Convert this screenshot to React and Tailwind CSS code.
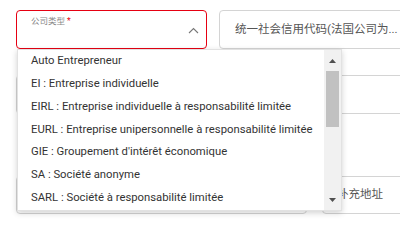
import React from "react";

const items = [
  "Auto Entrepreneur",
  "EI : Entreprise individuelle",
  "EIRL : Entreprise individuelle à responsabilité limitée",
  "EURL : Entreprise unipersonnelle à responsabilité limitée",
  "GIE : Groupement d'intérêt économique",
  "SA : Société anonyme",
  "SARL : Société à responsabilité limitée",
];

export default function App() {
  return (
    <div
      className="relative w-[400px] h-[226px] overflow-hidden bg-white"
      style={{ fontFamily: 'Roboto, "Noto Sans CJK SC", sans-serif' }}
    >
      <div className="flex flex-col pt-[10px] pl-[16px]">
        {/* row 1 */}
        <div className="flex gap-[12px] h-[39px]">
          <div className="relative w-[191px] shrink-0 rounded-[4px] border border-[#e60012] bg-white">
            <div className="absolute left-[14px] top-[6px] text-[8.5px] text-[#888] leading-none">
              公司类型<span className="text-[#e60012] ml-[2px]">*</span>
            </div>
            <svg className="absolute left-[171px] top-[16px]" width="11" height="7" viewBox="0 0 11 7">
              <path d="M1 6 L5.5 1.5 L10 6" fill="none" stroke="#777" strokeWidth="1.1" />
            </svg>
          </div>
          <div className="w-[220px] shrink-0 rounded-[4px] border border-[#d4d4d4] flex items-center pl-[15px] text-[11.5px] text-[#555] whitespace-nowrap">
            统一社会信用代码(法国公司为...
          </div>
        </div>
        {/* row 2 */}
        <div className="mt-[26px] h-[39px] w-[420px] rounded-[4px] border border-[#d4d4d4]"></div>
        {/* row 3 */}
        <div className="mt-[62px] flex gap-[15px] h-[38px]">
          <div className="w-[291px] shrink-0 rounded-[4px] border border-[#d4d4d4]"></div>
          <div className="w-[120px] shrink-0 rounded-[4px] border border-[#d4d4d4] flex items-center pl-[14px] text-[11.5px] text-[#555] whitespace-nowrap">
            补充地址
          </div>
        </div>
      </div>

      {/* dropdown */}
      <div className="absolute left-[17px] top-[49px] w-[325px] h-[162px] bg-white border border-[#e2e2e2] shadow-[0_2px_6px_rgba(0,0,0,0.18)] flex">
        <div className="flex-1 flex flex-col pl-[13px] pt-[0px]">
          {items.map((t) => (
            <div key={t} className="h-[23.2px] flex items-center text-[11.3px] text-[#333] whitespace-nowrap">
              {t}
            </div>
          ))}
        </div>
        <div className="w-[17px] h-full bg-[#f1f1f1] flex flex-col items-center">
          <div className="h-[21px] flex items-center justify-center">
            <svg width="7" height="4" viewBox="0 0 7 4"><path d="M0 4 L3.5 0 L7 4 Z" fill="#505050" /></svg>
          </div>
          <div className="w-[13px] h-[56px] bg-[#c1c1c1]"></div>
          <div className="flex-1"></div>
          <div className="h-[21px] flex items-center justify-center">
            <svg width="7" height="4" viewBox="0 0 7 4"><path d="M0 0 L3.5 4 L7 0 Z" fill="#505050" /></svg>
          </div>
        </div>
      </div>
    </div>
  );
}
